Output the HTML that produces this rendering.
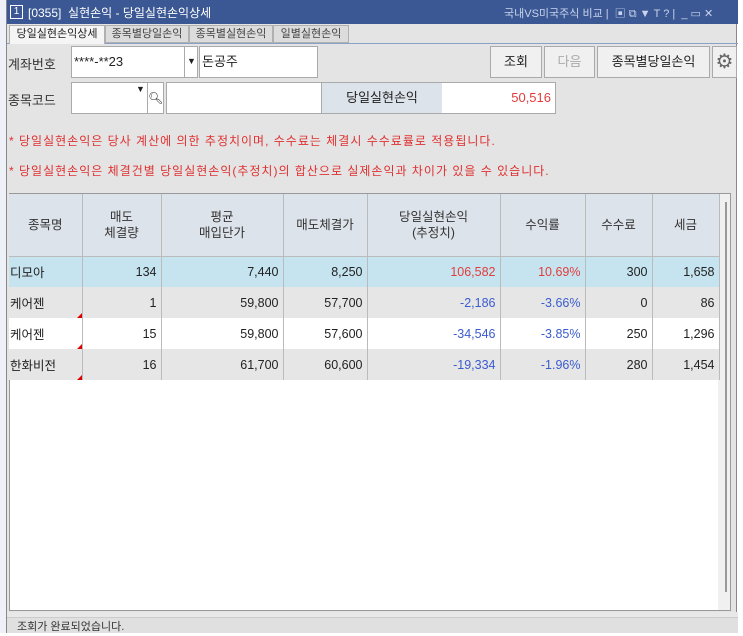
<!DOCTYPE html>
<html><head><meta charset="utf-8"><style>
*{margin:0;padding:0;box-sizing:border-box}
body{width:743px;height:633px;overflow:hidden;background:#fff;font-family:"Liberation Sans","Noto Sans CJK KR",sans-serif;font-size:12px;color:#222;position:relative}
.a{position:absolute}
#win{left:6px;top:0;width:731px;height:633px;background:#e4e4e4;border-left:1px solid #888;border-right:1px solid #888}
#title{left:0;top:0;width:731px;height:24px;background:#3b5894;color:#fff;font-size:12px}
.tab{top:25px;height:18px;border:1px solid #b0b0b0;background:#dcdcdc;font-size:11px;color:#444;text-align:center;line-height:16px}
.in{background:#fff;border:1px solid #aaa;height:32px;line-height:30px;font-size:13px}
.btn{background:#f0f0f0;border:1px solid #aaa;height:32px;line-height:30px;text-align:center;font-size:13px}
.lbl{font-size:13px;color:#333}
.note{color:#e03030;font-size:12px;letter-spacing:1px}
table{border-collapse:collapse;position:absolute;left:9px;top:194px;table-layout:fixed}
td{border-right:1px solid #bbb;height:31px;font-size:12.5px;text-align:right;padding-right:4px;white-space:nowrap}
th{background:#dde3ea;border-right:1px solid #bbb;border-bottom:1px solid #bbb;height:62px;font-weight:normal;font-size:12.5px;color:#333;line-height:16px}
.r{color:#e23c3c}.b{color:#3b5bd0}
td.n{text-align:left;padding-left:1px;position:relative}
.tri{position:absolute;right:0;bottom:0;width:0;height:0;border-left:5px solid transparent;border-bottom:5px solid #d00}
</style></head><body>
<div class="a" style="left:0;top:0;width:6px;height:633px;background:#eef2f8"></div>
<div id="win" class="a">
 <div id="title" class="a">
  <div class="a" style="left:3px;top:5px;width:13px;height:14px;border:1px solid #fff;font-size:10px;line-height:12px;text-align:center">1</div>
  <div class="a" style="left:21px;top:4px;font-size:12px">[0355]&nbsp; 실현손익 - 당일실현손익상세</div>
  <div class="a" style="left:497px;top:5px;font-size:11px;color:#c8d4ec">국내VS미국주식 비교 |&nbsp; ▣ ⧉ ▼ T ? |&nbsp; _ ▭ ✕</div>
 </div>
 <div class="a" style="left:0;top:43px;width:731px;height:1px;background:#8aa0c8"></div>
 <div class="a tab" style="left:2px;width:96px;background:#f5f5f5;color:#222;height:19px;border-bottom:none">당일실현손익상세</div>
 <div class="a tab" style="left:98px;width:84px">종목별당일손익</div>
 <div class="a tab" style="left:182px;width:84px">종목별실현손익</div>
 <div class="a tab" style="left:266px;width:76px">일별실현손익</div>
 <div class="a lbl" style="left:1px;top:54px">계좌번호</div>
 <div class="a in" style="left:64px;top:46px;width:127px;padding-left:2px">****-**23</div>
 <div class="a" style="left:177px;top:46px;width:14px;height:32px;border-left:1px solid #aaa;font-size:9px;line-height:30px;text-align:center">▼</div>
 <div class="a in" style="left:192px;top:46px;width:119px;padding-left:2px">돈공주</div>
 <div class="a btn" style="left:483px;top:46px;width:52px">조회</div>
 <div class="a btn" style="left:537px;top:46px;width:51px;color:#aaa">다음</div>
 <div class="a btn" style="left:590px;top:46px;width:113px">종목별당일손익</div>
 <div class="a btn" style="left:705px;top:46px;width:25px;font-size:20px;color:#666">⚙</div>
 <div class="a lbl" style="left:1px;top:90px">종목코드</div>
 <div class="a in" style="left:64px;top:82px;width:78px"></div>
 <div class="a" style="left:129px;top:84px;font-size:9px">▼</div>
 <div class="a in" style="left:140px;top:82px;width:17px;font-size:12px;text-align:center">🔍︎</div>
 <div class="a in" style="left:159px;top:82px;width:158px"></div>
 <div class="a" style="left:314px;top:82px;width:235px;height:32px;border:1px solid #aaa;background:#fff"></div>
 <div class="a" style="left:315px;top:83px;width:120px;height:30px;background:#dde3ea;text-align:center;line-height:30px;font-size:13px">당일실현손익</div>
 <div class="a r" style="left:436px;top:83px;width:108px;height:30px;text-align:right;line-height:30px;font-size:13px">50,516</div>
 <div class="a note" style="left:2px;top:132px">* 당일실현손익은 당사 계산에 의한 추정치이며, 수수료는 체결시 수수료률로 적용됩니다.</div>
 <div class="a note" style="left:2px;top:162px">* 당일실현손익은 체결건별 당일실현손익(추정치)의 합산으로 실제손익과 차이가 있을 수 있습니다.</div>
 <div class="a" style="left:2px;top:193px;width:722px;height:418px;background:#fff;border:1px solid #999"></div>
 <div class="a" style="left:711px;top:194px;width:12px;height:416px;background:#f0f0f0"><div style="margin:8px 0 0 7px;width:2px;height:390px;background:#999"></div></div>
 <div class="a" style="left:0;top:612px;width:731px;height:6px;background:#e8e8e8"></div>
 <div class="a" style="left:0;top:617px;width:731px;height:16px;background:#e0e0e0;border-top:1px solid #ccc;font-size:11px;color:#333;padding-left:10px;line-height:18px">조회가 완료되었습니다.</div>
</div>
<table>
<colgroup><col style="width:73px"><col style="width:79px"><col style="width:122px"><col style="width:84px"><col style="width:133px"><col style="width:85px"><col style="width:67px"><col style="width:67px"></colgroup>
<tr><th>종목명</th><th>매도<br>체결량</th><th>평균<br>매입단가</th><th>매도체결가</th><th>당일실현손익<br>(추정치)</th><th>수익률</th><th>수수료</th><th>세금</th></tr>
<tr style="background:#c6e4ef"><td class="n">디모아</td><td>134</td><td>7,440</td><td>8,250</td><td class="r">106,582</td><td class="r">10.69%</td><td>300</td><td>1,658</td></tr>
<tr style="background:#e6e6e6"><td class="n">케어젠<span class="tri"></span></td><td>1</td><td>59,800</td><td>57,700</td><td class="b">-2,186</td><td class="b">-3.66%</td><td>0</td><td>86</td></tr>
<tr style="background:#fff"><td class="n">케어젠<span class="tri"></span></td><td>15</td><td>59,800</td><td>57,600</td><td class="b">-34,546</td><td class="b">-3.85%</td><td>250</td><td>1,296</td></tr>
<tr style="background:#e6e6e6"><td class="n">한화비전<span class="tri"></span></td><td>16</td><td>61,700</td><td>60,600</td><td class="b">-19,334</td><td class="b">-1.96%</td><td>280</td><td>1,454</td></tr>
</table>
</body></html>
